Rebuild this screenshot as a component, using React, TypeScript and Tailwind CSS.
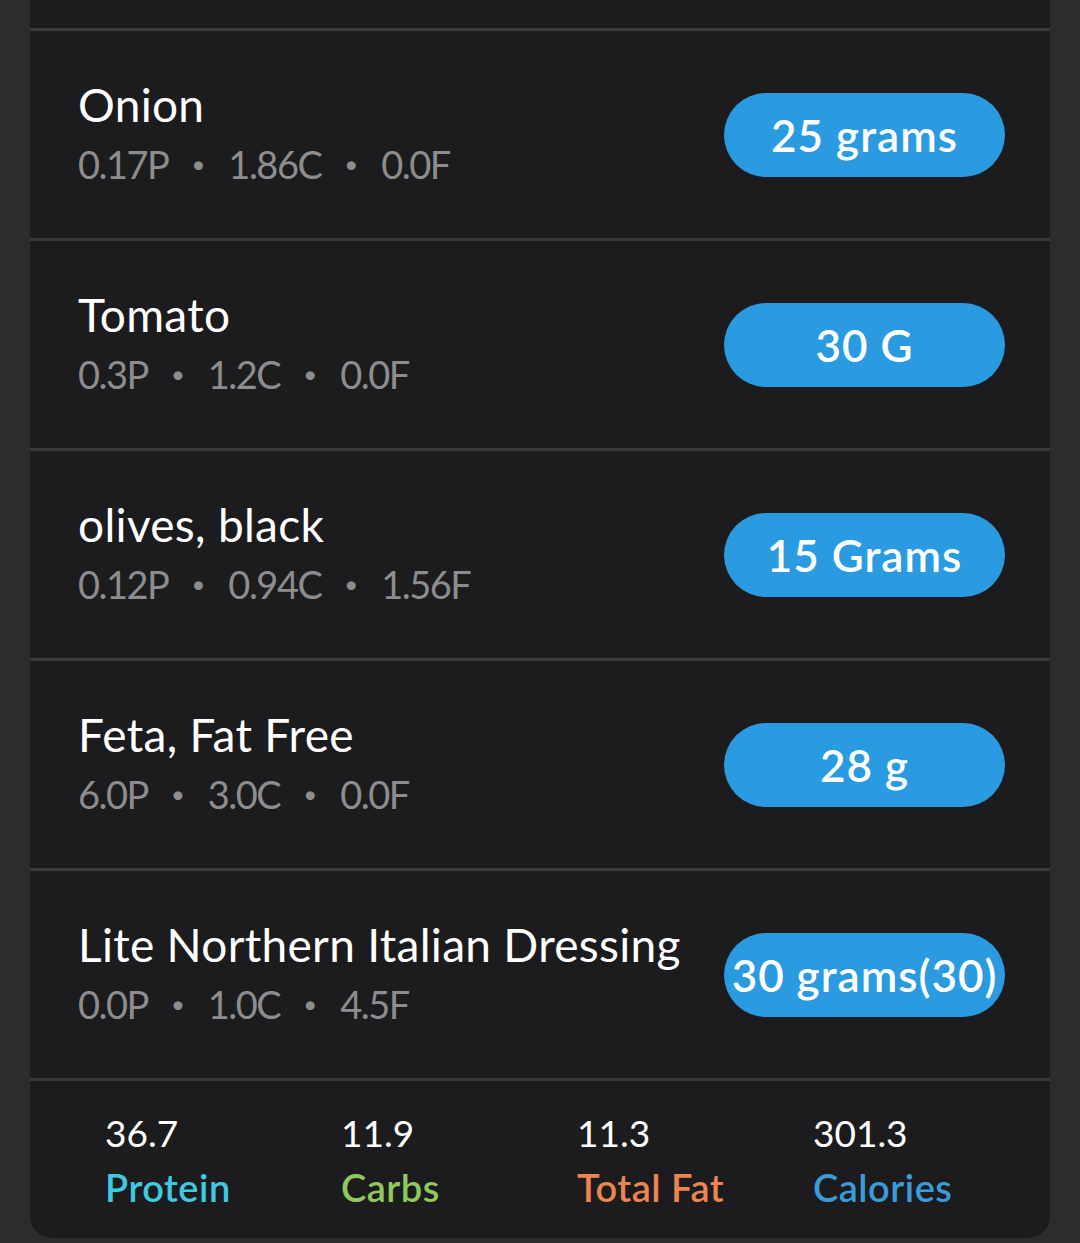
import React from "react";

interface Item {
  name: string;
  p: string;
  c: string;
  f: string;
  amount: string;
}

const items: Item[] = [
  { name: "Onion", p: "0.17P", c: "1.86C", f: "0.0F", amount: "25 grams" },
  { name: "Tomato", p: "0.3P", c: "1.2C", f: "0.0F", amount: "30 G" },
  { name: "olives, black", p: "0.12P", c: "0.94C", f: "1.56F", amount: "15 Grams" },
  { name: "Feta, Fat Free", p: "6.0P", c: "3.0C", f: "0.0F", amount: "28 g" },
  {
    name: "Lite Northern Italian Dressing",
    p: "0.0P",
    c: "1.0C",
    f: "4.5F",
    amount: "30 grams(30)",
  },
];

const totals = [
  { value: "36.7", label: "Protein", color: "text-[#3fc9e2]" },
  { value: "11.9", label: "Carbs", color: "text-[#8fc95c]" },
  { value: "11.3", label: "Total Fat", color: "text-[#ec8550]" },
  { value: "301.3", label: "Calories", color: "text-[#3b9bd8]" },
];

function Dot() {
  return <span className="mx-[23px] text-[24px] tracking-normal text-[#8d8d90]">•</span>;
}

export default function App() {
  return (
    <div
      className="h-[1243px] overflow-hidden bg-[#2c2c2e] px-[30px]"
      style={{ fontFamily: "Lato, 'Open Sans', sans-serif" }}
    >
      <div className="rounded-b-[22px] bg-[#1c1c1e]">
        <div className="h-[28px]" />
        {items.map((it) => (
          <div
            key={it.name}
            className="flex h-[210px] items-center justify-between border-t-[3px] border-[#3a3a3c] pl-[48px] pr-[45px]"
          >
            <div className="mb-[4px] flex flex-col">
              <div className="text-[46px] leading-[52px] tracking-[0.3px] text-white">{it.name}</div>
              <div className="mt-[10px] flex items-center text-[38px] leading-[46px] tracking-[-1.5px] text-[#8d8d90]">
                <span>{it.p}</span>
                <Dot />
                <span>{it.c}</span>
                <Dot />
                <span>{it.f}</span>
              </div>
            </div>
            <div className="flex h-[84px] w-[281px] shrink-0 items-center justify-center whitespace-nowrap rounded-full bg-[#2a9be0] text-[44px] font-semibold tracking-[1px] text-white">
              {it.amount}
            </div>
          </div>
        ))}
        <div className="grid h-[160px] grid-cols-[236px_236px_236px_236px] border-t-[3px] border-[#3a3a3c] pl-[75px] pt-[30px]">
          {totals.map((t) => (
            <div key={t.label} className="flex flex-col">
              <span className="text-[37px] leading-[44px] text-white">{t.value}</span>
              <span className={`mt-[10px] text-[38px] font-semibold leading-[44px] tracking-[0.5px] ${t.color}`}>
                {t.label}
              </span>
            </div>
          ))}
        </div>
      </div>
    </div>
  );
}
